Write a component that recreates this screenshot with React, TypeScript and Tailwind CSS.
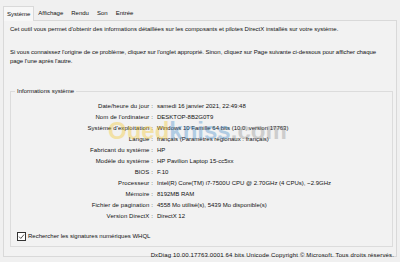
import React from "react";

const rows: [string, string][] = [
  ["Date/heure du jour :", "samedi 16 janvier 2021, 22:49:48"],
  ["Nom de l'ordinateur :", "DESKTOP-8B2G0T9"],
  ["Système d'exploitation :", "Windows 10 Famille 64 bits (10.0, version 17763)"],
  ["Langue :", "français (Paramètres régionaux : français)"],
  ["Fabricant du système :", "HP"],
  ["Modèle du système :", "HP Pavilion Laptop 15-cc5xx"],
  ["BIOS :", "F.10"],
  ["Processeur :", "Intel(R) Core(TM) i7-7500U CPU @ 2.70GHz (4 CPUs), ~2.9GHz"],
  ["Mémoire :", "8192MB RAM"],
  ["Fichier de pagination :", "4558 Mo utilisé(s), 5439 Mo disponible(s)"],
  ["Version DirectX :", "DirectX 12"],
];

const tabs = ["Système", "Affichage", "Rendu", "Son", "Entrée"];

export default function App() {
  return (
    <div
      className="relative w-[400px] h-[262px] overflow-hidden bg-[#f0f0f0] pt-[6px] px-[3px] text-[6px] leading-[9px] text-[#111]"
      style={{ fontFamily: '"Liberation Sans", Arial, sans-serif' }}
    >
      {/* onglets */}
      <div className="flex items-end h-[14px]">
        {tabs.map((t, i) =>
          i === 0 ? (
            <div
              key={t}
              className="h-[15px] -mb-px z-10 px-[3px] flex items-center border border-b-0 border-[#d9d9d9] bg-[#f7f7f7]"
            >
              {t}
            </div>
          ) : (
            <div key={t} className="h-[13px] px-[4px] flex items-center">
              {t}
            </div>
          )
        )}
      </div>

      {/* page */}
      <div className="h-[237px] border border-[#d9d9d9] bg-[#f2f2f2] flex flex-col">
        <p className="px-[6px] pt-[4px] whitespace-nowrap">
          Cet outil vous permet d'obtenir des informations détaillées sur les composants et pilotes DirectX installés sur votre système.
        </p>
        <p className="px-[6px] mt-[14px] whitespace-nowrap tracking-[-0.05px]">
          Si vous connaissez l'origine de ce problème, cliquez sur l'onglet approprié. Sinon, cliquez sur Page suivante ci-dessous pour afficher chaque
          <br />
          page l'une après l'autre.
        </p>

        <fieldset className="ml-[6px] mr-[3px] mt-[21px] border border-[#dcdcdc] pb-[5px]">
          <legend className="ml-[4px] px-[2px]">Informations système</legend>
          <div className="mt-[5px] grid grid-cols-[142px_1fr] gap-x-[4px]">
            {rows.map(([k, v]) => (
              <React.Fragment key={k}>
                <div className="text-right h-[11px] leading-[11px] whitespace-nowrap tracking-[0.1px]">{k}</div>
                <div className="h-[11px] leading-[11px] whitespace-nowrap">{v}</div>
              </React.Fragment>
            ))}
          </div>
          <label className="mt-[10px] ml-[6px] flex items-center gap-[2px]">
            <span className="w-[9px] h-[9px] border border-[#333] bg-white flex items-center justify-center">
              <svg viewBox="0 0 10 10" className="w-[7px] h-[7px]">
                <path d="M1.5 5.2 L4 7.8 L8.6 2.2" fill="none" stroke="#222" strokeWidth="1.1" />
              </svg>
            </span>
            Rechercher les signatures numériques WHQL
          </label>
        </fieldset>

        <div className="mt-[4px] pr-[2px] text-right whitespace-nowrap tracking-[0.15px]">
          DxDiag 10.00.17763.0001 64 bits Unicode Copyright © Microsoft. Tous droits réservés.
        </div>
      </div>

      {/* filigrane */}
      <div className="absolute left-[108px] top-[119px] text-[24px] leading-[24px] font-bold opacity-35 pointer-events-none whitespace-nowrap">
        <span className="text-[#f2c31a]">Oued</span>
        <span className="text-[#3a86c8]">kniss</span>
        <span className="text-[#8a8a8a]">.com</span>
      </div>
    </div>
  );
}
